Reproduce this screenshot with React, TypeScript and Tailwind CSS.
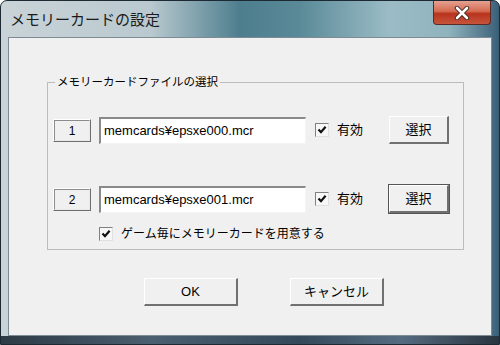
import React from "react";

const font = { fontFamily: '"Liberation Sans", "Noto Sans CJK JP", sans-serif' };

function SlotLabel({ n }: { n: string }) {
  return (
    <div className="w-[38px] h-[23px] border-t border-l border-t-white border-l-white border-b border-r border-b-[#6f6f6f] border-r-[#6f6f6f]">
      <div className="w-full h-full border-t border-l border-t-[#8c8c8c] border-l-[#8c8c8c] border-b border-r border-b-[#e8e8e8] border-r-[#e8e8e8] flex items-center justify-center text-[12px] pt-[2px] text-black">
        {n}
      </div>
    </div>
  );
}

function Check({ label, size }: { label: string; size: string }) {
  return (
    <div className="flex items-center">
      <div className="w-[14px] h-[14px] border-t border-l border-t-[#808080] border-l-[#808080] border-b border-r border-b-[#e0e0e0] border-r-[#e0e0e0] bg-[#f7f7f7] flex items-center justify-center">
        <svg width="10" height="10" viewBox="0 0 10 10">
          <path d="M1.5 4.5 L4 7.2 L8.6 1.8" fill="none" stroke="#111" strokeWidth="2.2" />
        </svg>
      </div>
      <span className={"ml-[8px] text-black " + size}>{label}</span>
    </div>
  );
}

function Btn({ children, w, focus }: { children: React.ReactNode; w: string; focus?: boolean }) {
  return (
    <div
      className={
        "h-[28px] flex items-center justify-center text-[13px] text-black bg-[#f0f0f0] border-t border-l border-t-white border-l-white border-b-2 border-r-2 border-b-[#707070] border-r-[#707070] " +
        w +
        (focus ? " outline outline-1 outline-[#555]" : "")
      }
    >
      {children}
    </div>
  );
}

function PathBox({ value }: { value: string }) {
  return (
    <div className="w-[207px] h-[27px] bg-white border-t-2 border-l-2 border-t-[#8a8a8a] border-l-[#8a8a8a] border-b border-r border-b-[#f4f4f4] border-r-[#f4f4f4] flex items-center pl-[3px] text-[13px] text-black">
      {value}
    </div>
  );
}

function Row({ n, value, focus }: { n: string; value: string; focus?: boolean }) {
  return (
    <div className="flex items-center h-[28px]">
      <SlotLabel n={n} />
      <div className="ml-[8px]">
        <PathBox value={value} />
      </div>
      <div className="ml-[9px] w-[74px]">
        <Check label="有効" size="text-[13px]" />
      </div>
      <Btn w="w-[60px]" focus={focus}>選択</Btn>
    </div>
  );
}

export default function App() {
  return (
    <div
      className="w-[500px] h-[345px] flex flex-col rounded-t-[7px] border border-[#1e2a33] bg-[linear-gradient(90deg,#c9d3d8_0%,#b9c9cf_30%,#4d7e8e_48%,#5a8a98_60%,#9bbcc5_78%,#8fb3bd_90%,#3b5f78_100%)] overflow-hidden"
      style={font}
    >
      <div className="h-[36px] flex items-start justify-between">
        <div className="pl-[9px] pt-[8px] text-[15px] text-[#1a1a1a]">メモリーカードの設定</div>
        <div className="mr-[8px] w-[58px] h-[24px] rounded-b-[4px] border border-[#5a2a26] border-t-0 bg-[linear-gradient(180deg,#e6a191_0%,#d46a50_45%,#b8331d_55%,#c8543b_100%)] flex items-center justify-center">
          <svg width="16" height="14" viewBox="0 0 16 14">
            <path d="M3 2 L13 12 M13 2 L3 12" stroke="#3a2020" strokeWidth="4.4" strokeLinecap="round" />
            <path d="M3 2 L13 12 M13 2 L3 12" stroke="#ffffff" strokeWidth="2.6" strokeLinecap="round" />
          </svg>
        </div>
      </div>
      <div className="mx-[7px] w-[484px] h-[299px] bg-[#f0f0f0] border border-[#7d8b94] flex flex-col">
        <fieldset className="ml-[38px] mt-[36px] w-[417px] h-[176px] border border-[#bcbcbc] p-0">
          <legend className="ml-[7px] px-[2px] text-[11.5px] leading-[16px] text-black">
            メモリーカードファイルの選択
          </legend>
          <div className="pl-[5px] mt-[26px] flex flex-col">
            <Row n="1" value="memcards¥epsxe000.mcr" />
            <div className="mt-[41px]">
              <Row n="2" value="memcards¥epsxe001.mcr" focus />
            </div>
            <div className="ml-[46px] mt-[12px]">
              <Check label="ゲーム毎にメモリーカードを用意する" size="text-[12px]" />
            </div>
          </div>
        </fieldset>
        <div className="mt-[28px] ml-[135px] flex gap-[52px]">
          <Btn w="w-[94px]">OK</Btn>
          <Btn w="w-[94px]">キャンセル</Btn>
        </div>
      </div>
      <div className="flex-1 bg-[linear-gradient(90deg,#2c3a44_0%,#4a5f70_30%,#34495a_60%,#556c80_80%,#2a3440_100%)]" />
    </div>
  );
}
